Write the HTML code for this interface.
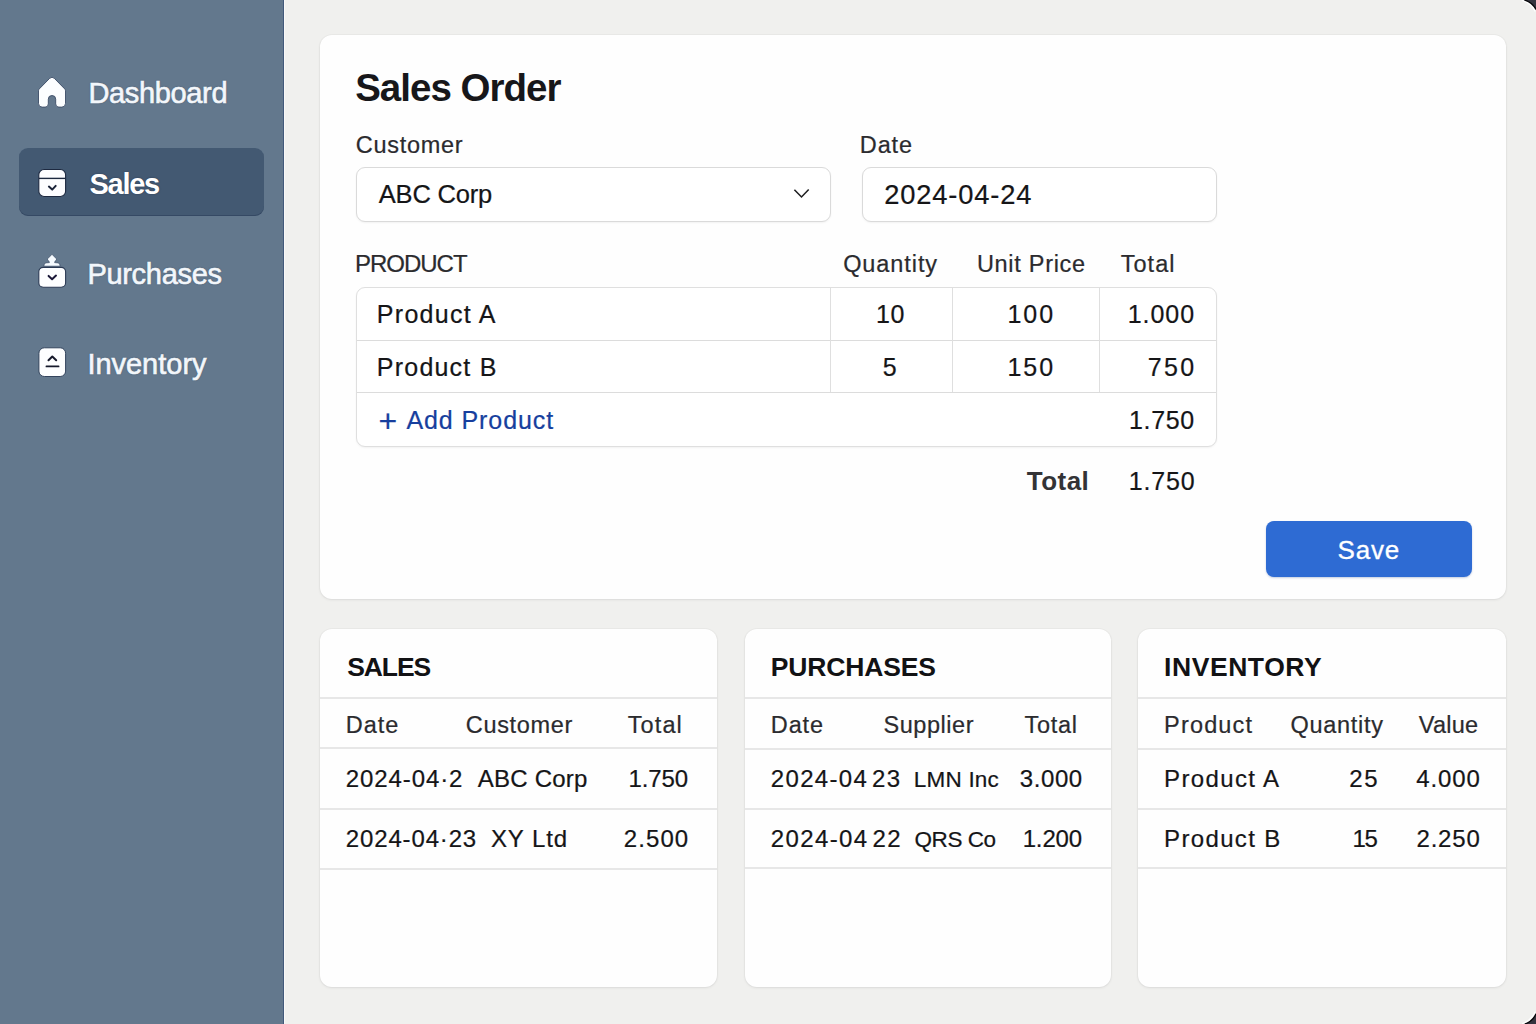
<!DOCTYPE html>
<html lang="en">
<head>
<meta charset="utf-8">
<title>Sales Order</title>
<style>
*{box-sizing:border-box;margin:0;padding:0}
html,body{width:1536px;height:1024px;overflow:hidden;background:#2b2d39}
body{font-family:"Liberation Sans",Arial,sans-serif;color:#1c1c1e;position:relative}
#main{position:absolute;left:0;top:0;width:1536px;height:1024px;background:#f0f0ee;overflow:hidden}
#side{position:absolute;left:0;top:0;width:284px;height:1024px;background:#63788d;border-right:1px solid #42597a;box-shadow:1px 0 0 #f8f8f8}
#active{position:absolute;left:19px;top:148px;width:245px;height:68px;border-radius:9px;background:#435972;box-shadow:inset 0 -1px 0 rgba(40,58,85,.5)}
.card{position:absolute;background:#fefefe;border-radius:12px;box-shadow:0 1px 3px rgba(0,0,0,.07),0 0 0 1px rgba(0,0,0,.025)}
.t{position:absolute;white-space:nowrap;-webkit-text-stroke:.22px currentColor}
.sb{-webkit-text-stroke:.65px #f3f7fb;text-shadow:0 0 1.5px rgba(35,50,78,.75)}
.sv{-webkit-text-stroke:.3px #fff}
.sbb{text-shadow:0 0 1.5px rgba(25,38,62,.7)}
.box{position:absolute;border:1px solid #dadada;border-radius:9px;background:#fff;box-shadow:0 1px 2px rgba(0,0,0,.05)}
.hl{position:absolute;height:1px;background:#dcdcdc}
.vl{position:absolute;width:1px;background:#dfdfdf}
.dv{position:absolute;height:2px;background:#e7e7e7}
#save{position:absolute;left:1266px;top:521px;width:206px;height:56px;border-radius:8px;background:#2e6bd3;box-shadow:0 1px 2px rgba(20,60,140,.25)}
svg{position:absolute;left:0;top:0;overflow:visible}
</style>
</head>
<body>
<div id="main">
<div id="side"><div id="active"></div>
<svg width="284" height="420" viewBox="0 0 284 420" fill="none">
  <!-- home -->
  <path d="M49.6 78.4 39.3 88.9a2.6 2.6 0 0 0-.8 1.9V103.4a3.7 3.7 0 0 0 3.7 3.7h2.9a3.2 3.2 0 0 0 3.2-3.2V99.2a3.7 3.7 0 0 1 7.4 0v4.7a3.2 3.2 0 0 0 3.2 3.2h2.9a3.7 3.7 0 0 0 3.7-3.7V90.8a2.6 2.6 0 0 0-.8-1.9L54.4 78.4a3.4 3.4 0 0 0-4.8 0z" fill="#fcfeff" stroke="#3b4c66" stroke-width=".9"/>
  <!-- sales -->
  <rect x="38.8" y="169.5" width="26.8" height="27" rx="5.2" fill="#fdfdff" stroke="#1d2940" stroke-width="1.1"/>
  <path d="M39 178.4H65.4" stroke="#1d2940" stroke-width="1.4"/>
  <path d="M48.9 186.6 52.2 189.6 55.7 185.9" stroke="#1a2238" stroke-width="2" stroke-linecap="round" stroke-linejoin="round"/>
  <!-- purchases -->
  <path d="M52 254.3 56.4 258.8Q57.2 260.4 55.2 260.9L54.6 262.6 58.4 262.9Q60 263.8 60.2 266.2H43.8Q44 263.8 45.6 262.9L49.4 262.6 48.8 260.9Q46.8 260.4 47.6 258.8Z" fill="#f6fbff" stroke="#3b4c66" stroke-width=".7" stroke-linejoin="round"/>
  <rect x="38.8" y="267.4" width="26.8" height="19.8" rx="4.4" fill="#fdfeff" stroke="#2c3b55" stroke-width="1.1"/>
  <path d="M48.6 275.9 52.1 279.2 56 275.6" stroke="#1a1838" stroke-width="2" stroke-linecap="round" stroke-linejoin="round"/>
  <!-- inventory -->
  <rect x="38.9" y="347.8" width="26.7" height="28.7" rx="5.4" fill="#fdfeff" stroke="#33445d" stroke-width="1"/>
  <path d="M48.5 360.2 52.3 356.5 56.2 360.2" stroke="#161a2c" stroke-width="2" stroke-linecap="round" stroke-linejoin="round"/>
  <path d="M46.4 366.4H58.6" stroke="#161a2c" stroke-width="1.7" stroke-linecap="round"/>
</svg>
</div>

<div class="card" style="left:320px;top:35px;width:1186px;height:564px"></div>
<div class="box" style="left:356px;top:167px;width:475px;height:54.5px"></div>
<div class="box" style="left:862px;top:167px;width:355px;height:54.5px"></div>
<div class="box" style="left:356px;top:286.5px;width:861px;height:160px;border-color:#dfdfdf"></div>
<div class="hl" style="left:357px;top:339.5px;width:859px"></div>
<div class="hl" style="left:357px;top:392px;width:859px"></div>
<div class="vl" style="left:830px;top:287px;height:105px"></div>
<div class="vl" style="left:951.5px;top:287px;height:105px"></div>
<div class="vl" style="left:1099px;top:287px;height:105px"></div>
<div id="save"></div>
<svg width="1536" height="1024" viewBox="0 0 1536 1024" fill="none" style="pointer-events:none">
    <path d="M1523.8 0Q1532 2 1536 9.7V0Z" fill="#35353f"/>
  <path d="M1524.4 0Q1532.2 2.2 1536 9.4" stroke="#060609" stroke-width="1.3"/>
  <path d="M1521.8 .5Q1531 3.2 1535.2 11.4" stroke="#fff" stroke-width="1.1" opacity=".95"/>
  <path d="M1524.2 1024Q1532.4 1021.6 1536 1013.4V1024Z" fill="#34333e"/>
  <path d="M1524.8 1024Q1532.6 1021.4 1536 1013.8" stroke="#060609" stroke-width="1.3"/>
  <path d="M1522 1023.6Q1531.2 1020.6 1535.2 1011.6" stroke="#fff" stroke-width="1.1" opacity=".95"/>
  <path d="M794.4 189.7 801.5 197 808.7 189.5" stroke="#1e1e20" stroke-width="1.55" stroke-linecap="butt" stroke-linejoin="miter"/>
</svg>

<div class="card" style="left:320px;top:629px;width:397px;height:358px"></div>
<div class="card" style="left:745px;top:629px;width:366px;height:358px"></div>
<div class="card" style="left:1138px;top:629px;width:368px;height:358px"></div>
<div class="dv" style="left:320px;top:697px;width:397px"></div>
<div class="dv" style="left:320px;top:747px;width:397px"></div>
<div class="dv" style="left:320px;top:808px;width:397px"></div>
<div class="dv" style="left:320px;top:867.5px;width:397px"></div>
<div class="dv" style="left:745px;top:697px;width:366px"></div>
<div class="dv" style="left:745px;top:747.5px;width:366px"></div>
<div class="dv" style="left:745px;top:808px;width:366px"></div>
<div class="dv" style="left:745px;top:867px;width:366px"></div>
<div class="dv" style="left:1138px;top:697px;width:368px"></div>
<div class="dv" style="left:1138px;top:747.5px;width:368px"></div>
<div class="dv" style="left:1138px;top:808px;width:368px"></div>
<div class="dv" style="left:1138px;top:867px;width:368px"></div>
<div class="t sb" style="left:88.40px;top:78.65px;font-size:29px;line-height:29px;color:#f3f7fb;letter-spacing:-0.34px;">Dashboard</div>
<div class="t sbb" style="left:89.50px;top:170.45px;font-size:29px;line-height:29px;color:#ffffff;font-weight:bold;-webkit-text-stroke:0;letter-spacing:-1.29px;">Sales</div>
<div class="t sb" style="left:87.40px;top:259.65px;font-size:29px;line-height:29px;color:#f3f7fb;letter-spacing:-0.30px;">Purchases</div>
<div class="t sb" style="left:87.40px;top:349.85px;font-size:29px;line-height:29px;color:#f3f7fb;letter-spacing:-0.02px;">Inventory</div>
<div class="t" style="left:355.17px;top:69.41px;font-size:38.5px;line-height:38.5px;color:#17171a;font-weight:bold;-webkit-text-stroke:0;letter-spacing:-0.98px;">Sales Order</div>
<div class="t" style="left:355.83px;top:134.11px;font-size:23.5px;line-height:23.5px;color:#2b2b2e;letter-spacing:0.70px;">Customer</div>
<div class="t" style="left:859.82px;top:134.11px;font-size:23.5px;line-height:23.5px;color:#2b2b2e;letter-spacing:0.85px;">Date</div>
<div class="t" style="left:378.78px;top:182.41px;font-size:25.5px;line-height:25.5px;color:#151517;letter-spacing:-0.20px;">ABC Corp</div>
<div class="t" style="left:884.18px;top:180.89px;font-size:27.3px;line-height:27.3px;color:#151517;letter-spacing:0.86px;">2024-04-24</div>
<div class="t" style="left:355.06px;top:251.68px;font-size:24px;line-height:24px;color:#2b2b2e;letter-spacing:-1.02px;">PRODUCT</div>
<div class="t" style="left:843.17px;top:253.11px;font-size:23.5px;line-height:23.5px;color:#2b2b2e;letter-spacing:0.92px;">Quantity</div>
<div class="t" style="left:976.88px;top:253.11px;font-size:23.5px;line-height:23.5px;color:#2b2b2e;letter-spacing:0.71px;">Unit Price</div>
<div class="t" style="left:1120.65px;top:253.11px;font-size:23.5px;line-height:23.5px;color:#2b2b2e;letter-spacing:1.05px;">Total</div>
<div class="t" style="left:376.86px;top:301.84px;font-size:25px;line-height:25px;color:#151517;letter-spacing:1.28px;">Product A</div>
<div class="t" style="left:876.09px;top:301.84px;font-size:25px;line-height:25px;color:#151517;letter-spacing:0.58px;">10</div>
<div class="t" style="left:1007.42px;top:301.84px;font-size:25px;line-height:25px;color:#151517;letter-spacing:1.98px;">100</div>
<div class="t" style="left:1127.70px;top:301.84px;font-size:25px;line-height:25px;color:#151517;letter-spacing:0.96px;">1.000</div>
<div class="t" style="left:376.86px;top:354.64px;font-size:25px;line-height:25px;color:#151517;letter-spacing:1.21px;">Product B</div>
<div class="t" style="left:882.79px;top:354.64px;font-size:25px;line-height:25px;color:#151517;">5</div>
<div class="t" style="left:1007.42px;top:354.64px;font-size:25px;line-height:25px;color:#151517;letter-spacing:1.98px;">150</div>
<div class="t" style="left:1147.79px;top:354.64px;font-size:25px;line-height:25px;color:#151517;letter-spacing:2.30px;">750</div>
<div class="t" style="left:378.55px;top:404.91px;font-size:32px;line-height:32px;color:#173f9e;">+</div>
<div class="t" style="left:406.43px;top:407.84px;font-size:25px;line-height:25px;color:#173f9e;letter-spacing:0.92px;">Add Product</div>
<div class="t" style="left:1129.09px;top:408.04px;font-size:25px;line-height:25px;color:#151517;letter-spacing:0.61px;">1.750</div>
<div class="t" style="left:1026.71px;top:467.99px;font-size:26px;line-height:26px;color:#333336;font-weight:bold;-webkit-text-stroke:0;letter-spacing:0.49px;">Total</div>
<div class="t" style="left:1128.78px;top:468.84px;font-size:25px;line-height:25px;color:#151517;letter-spacing:0.85px;">1.750</div>
<div class="t sv" style="left:1337.45px;top:536.99px;font-size:26px;line-height:26px;color:#ffffff;letter-spacing:0.87px;">Save</div>
<div class="t" style="left:347.15px;top:653.57px;font-size:26.5px;line-height:26.5px;color:#121214;font-weight:bold;-webkit-text-stroke:0;letter-spacing:-1.08px;">SALES</div>
<div class="t" style="left:345.82px;top:713.91px;font-size:23.5px;line-height:23.5px;color:#2b2b2e;letter-spacing:0.95px;">Date</div>
<div class="t" style="left:465.72px;top:713.91px;font-size:23.5px;line-height:23.5px;color:#2b2b2e;letter-spacing:0.69px;">Customer</div>
<div class="t" style="left:627.65px;top:713.91px;font-size:23.5px;line-height:23.5px;color:#2b2b2e;letter-spacing:1.13px;">Total</div>
<div class="t" style="left:345.80px;top:767.08px;font-size:24px;line-height:24px;color:#151517;letter-spacing:0.90px;">2024-04·2</div>
<div class="t" style="left:477.67px;top:767.08px;font-size:24px;line-height:24px;color:#151517;letter-spacing:0.25px;">ABC Corp</div>
<div class="t" style="left:628.45px;top:767.08px;font-size:24px;line-height:24px;color:#151517;letter-spacing:-0.08px;">1.750</div>
<div class="t" style="left:345.80px;top:826.68px;font-size:24px;line-height:24px;color:#151517;letter-spacing:0.85px;">2024-04·23</div>
<div class="t" style="left:490.94px;top:826.68px;font-size:24px;line-height:24px;color:#151517;letter-spacing:0.90px;">XY Ltd</div>
<div class="t" style="left:623.80px;top:826.68px;font-size:24px;line-height:24px;color:#151517;letter-spacing:1.08px;">2.500</div>
<div class="t" style="left:770.78px;top:653.57px;font-size:26.5px;line-height:26.5px;color:#121214;font-weight:bold;-webkit-text-stroke:0;letter-spacing:-0.14px;">PURCHASES</div>
<div class="t" style="left:770.82px;top:713.91px;font-size:23.5px;line-height:23.5px;color:#2b2b2e;letter-spacing:0.88px;">Date</div>
<div class="t" style="left:883.42px;top:713.91px;font-size:23.5px;line-height:23.5px;color:#2b2b2e;letter-spacing:0.56px;">Supplier</div>
<div class="t" style="left:1024.45px;top:713.91px;font-size:23.5px;line-height:23.5px;color:#2b2b2e;letter-spacing:0.75px;">Total</div>
<div class="t" style="left:770.80px;top:767.08px;font-size:24px;line-height:24px;color:#151517;letter-spacing:1.32px;word-spacing:-4px;">2024-04 23</div>
<div class="t" style="left:913.78px;top:769.35px;font-size:22.5px;line-height:22.5px;color:#151517;letter-spacing:0.22px;">LMN Inc</div>
<div class="t" style="left:1019.79px;top:767.08px;font-size:24px;line-height:24px;color:#151517;letter-spacing:0.58px;">3.000</div>
<div class="t" style="left:770.80px;top:826.68px;font-size:24px;line-height:24px;color:#151517;letter-spacing:1.38px;word-spacing:-4px;">2024-04 22</div>
<div class="t" style="left:914.53px;top:828.95px;font-size:22.5px;line-height:22.5px;color:#151517;letter-spacing:-0.44px;">QRS Co</div>
<div class="t" style="left:1022.68px;top:826.68px;font-size:24px;line-height:24px;color:#151517;letter-spacing:-0.15px;">1.200</div>
<div class="t" style="left:1164.08px;top:653.57px;font-size:26.5px;line-height:26.5px;color:#121214;font-weight:bold;-webkit-text-stroke:0;letter-spacing:0.56px;">INVENTORY</div>
<div class="t" style="left:1164.08px;top:713.91px;font-size:23.5px;line-height:23.5px;color:#2b2b2e;letter-spacing:1.16px;">Product</div>
<div class="t" style="left:1290.53px;top:713.91px;font-size:23.5px;line-height:23.5px;color:#2b2b2e;letter-spacing:0.70px;">Quantity</div>
<div class="t" style="left:1418.74px;top:713.91px;font-size:23.5px;line-height:23.5px;color:#2b2b2e;letter-spacing:0.26px;">Value</div>
<div class="t" style="left:1164.05px;top:767.08px;font-size:24px;line-height:24px;color:#151517;letter-spacing:1.36px;">Product A</div>
<div class="t" style="left:1349.23px;top:767.08px;font-size:24px;line-height:24px;color:#151517;letter-spacing:1.64px;">25</div>
<div class="t" style="left:1416.32px;top:767.08px;font-size:24px;line-height:24px;color:#151517;letter-spacing:0.85px;">4.000</div>
<div class="t" style="left:1164.05px;top:826.68px;font-size:24px;line-height:24px;color:#151517;letter-spacing:1.35px;">Product B</div>
<div class="t" style="left:1352.45px;top:826.68px;font-size:24px;line-height:24px;color:#151517;letter-spacing:-1.31px;">15</div>
<div class="t" style="left:1416.49px;top:826.68px;font-size:24px;line-height:24px;color:#151517;letter-spacing:0.81px;">2.250</div>
</div>
</body>
</html>
